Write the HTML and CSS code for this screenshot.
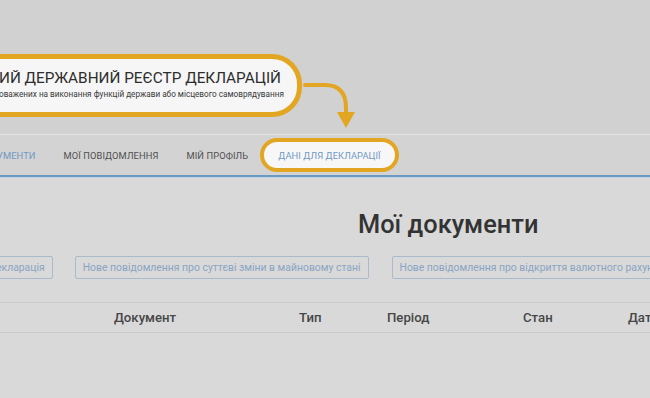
FILE: index.html
```html
<!DOCTYPE html>
<html lang="uk">
<head>
<meta charset="utf-8">
<title>Мої документи</title>
<link rel="stylesheet" href="styles.css">
</head>
<body>
<div class="page">
  <header class="top">
    <div class="callout">
      <div class="callout-title">ИЙ ДЕРЖАВНИЙ РЕЄСТР ДЕКЛАРАЦІЙ</div>
      <div class="callout-sub">оважених на виконання функцій держави або місцевого самоврядування</div>
    </div>
    <svg class="arrow" width="70" height="60" viewBox="0 0 70 60" aria-hidden="true">
      <path d="M2 23 H22 Q43 23 43 46 V52" fill="none" stroke="#e2a623" stroke-width="4" stroke-linecap="round"/>
      <polygon points="34,50 52,50 43,66" fill="#e2a623"/>
    </svg>
  </header>
  <nav class="nav">
    <span class="nav-item active">УМЕНТИ</span>
    <span class="nav-item">МОЇ ПОВІДОМЛЕННЯ</span>
    <span class="nav-item">МІЙ ПРОФІЛЬ</span>
    <span class="nav-item pill">ДАНІ ДЛЯ ДЕКЛАРАЦІЇ</span>
  </nav>
  <main class="main">
    <h1 class="title">Мої документи</h1>
    <div class="actions">
      <span class="btn first">екларація</span>
      <span class="btn">Нове повідомлення про суттєві зміни в майновому стані</span>
      <span class="btn">Нове повідомлення про відкриття валютного рахунку</span>
    </div>
    <div class="thead">
      <span class="th">Документ</span>
      <span class="th">Тип</span>
      <span class="th">Період</span>
      <span class="th">Стан</span>
      <span class="th">Дата</span>
    </div>
  </main>
</div>
</body>
</html>
```

FILE: styles.css
```css
* { box-sizing: border-box; }
html, body { margin: 0; padding: 0; }
body {
  width: 650px;
  height: 398px;
  overflow: hidden;
  background: #d9d9d9;
  font-family: Roboto, "Noto Sans", sans-serif;
}
.page { width: 650px; overflow: hidden; }

.top {
  position: relative;
  height: 134px;
  background: #d1d1d1;
  padding-top: 54px;
}
.callout {
  width: 332px;
  height: 63px;
  margin-left: -30px;
  border: 5px solid #e2a623;
  border-radius: 30px;
  background: #f6f6f6;
  padding: 10px 0 0 24px;
  white-space: nowrap;
}
.callout-title {
  font-size: 15.3px;
  line-height: 18px;
  color: #2d2d2d;
  font-weight: 400;
}
.callout-sub {
  margin-top: 2px;
  font-size: 8.2px;
  line-height: 10px;
  color: #3a3a3a;
}
.arrow {
  position: absolute;
  left: 303px;
  top: 62px;
  overflow: visible;
}

.nav {
  height: 43px;
  background: #d3d3d3;
  border-top: 1px solid #e3e3e3;
  border-bottom: 2px solid #6a9ac4;
  box-shadow: 0 1px 0 #c3d3e2;
  display: flex;
  align-items: center;
  margin-left: -17px;
  white-space: nowrap;
}
.nav-item {
  padding: 0 14px;
  font-size: 9.3px;
  color: #505050;
  letter-spacing: 0.1px;
}
.nav-item.active { color: #6f97c4; }
.nav-item.pill {
  margin-left: -2px;
  height: 34px;
  display: flex;
  align-items: center;
  padding: 0 14px;
  border: 4px solid #e2a623;
  border-radius: 18px;
  background: #f7f7f7;
  color: #6f97c4;
}

.main { padding-top: 32px; }
.title {
  margin: 0 0 0 358px;
  font-size: 25.4px;
  line-height: 30px;
  font-weight: 500;
  color: #333;
  white-space: nowrap;
}
.actions {
  display: flex;
  gap: 23px;
  margin-top: 17px;
  margin-left: -12px;
  white-space: nowrap;
}
.btn {
  flex: none;
  height: 23px;
  display: flex;
  align-items: center;
  padding: 0 7px;
  border: 1px solid #a9bacb;
  border-radius: 2px;
  font-size: 10.4px;
  color: #8aa5c3;
}
.btn.first { margin-right: -1px; }
.thead {
  margin-top: 23px;
  height: 31px;
  border-top: 1px solid #cbcbcb;
  border-bottom: 1px solid #cbcbcb;
  display: grid;
  grid-template-columns: 185px 88px 136px 105px 1fr;
  align-items: center;
  padding-left: 114px;
  white-space: nowrap;
}
.th {
  font-size: 13.2px;
  font-weight: 500;
  color: #474747;
}
```
